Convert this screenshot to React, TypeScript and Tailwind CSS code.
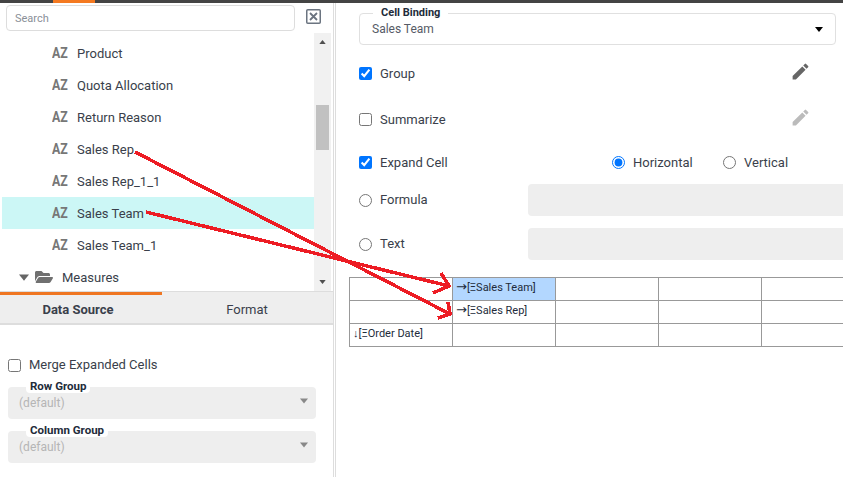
import React from 'react';
import { MdEdit } from 'react-icons/md';
import { FaFolderOpen } from 'react-icons/fa';

const fields = ['Product', 'Quota Allocation', 'Return Reason', 'Sales Rep', 'Sales Rep_1_1', 'Sales Team', 'Sales Team_1'];

const Triangle: React.FC<{ className: string; up?: boolean }> = ({ className, up }) => (
  <svg className={className} viewBox="0 0 8 5" fill="currentColor">
    <path d={up ? 'M0 5L4 0L8 5Z' : 'M0 0L8 0L4 5Z'} />
  </svg>
);

const FieldRow: React.FC<{ name: string; selected: boolean }> = ({ name, selected }) => (
  <div className={`flex h-8 items-center ${selected ? 'bg-[#ccf7f6]' : ''}`}>
    <span className="ml-[50px] w-[25px] origin-left scale-x-[0.82] font-bold text-[15px] leading-none text-[#777]">AZ</span>
    <span className="mt-[2px] text-[13px] text-[#3a3f4b]">{name}</span>
  </div>
);

const GroupSelect: React.FC<{ label: string }> = ({ label }) => (
  <div className="relative h-8 rounded bg-[#eeeeee] flex items-center justify-between pl-[11px] pr-2">
    <span className="absolute left-[18px] -top-[8px] bg-white rounded-b px-1 text-[11.5px] leading-[14px] font-bold text-[#222b3a]">{label}</span>
    <span className="text-[12px] text-[#b5b5b5]">(default)</span>
    <Triangle className="w-2 h-[6px] text-[#888] -mt-[4px]" />
  </div>
);

const CheckRow: React.FC<{ label: string; checked?: boolean; pencil?: string; className: string }> = ({ label, checked, pencil, className }) => (
  <div className={`flex h-8 items-center ${className}`}>
    <input type="checkbox" readOnly checked={!!checked} className="m-0 w-[13px] h-[13px]" />
    <span className="ml-2 mt-[2px] text-[13px] text-[#3a3f4b]">{label}</span>
    {pencil && <MdEdit className={`ml-auto mr-[32px] -mt-1 ${pencil}`} size={21} />}
  </div>
);

const FieldRadio: React.FC<{ label: string; className: string }> = ({ label, className }) => (
  <div className={`flex h-8 items-center ${className}`}>
    <input type="radio" readOnly checked={false} className="m-0 w-[13px] h-[13px]" />
    <span className="ml-2 w-[148px] text-[13px] text-[#3a3f4b]">{label}</span>
    <div className="h-8 flex-1 rounded-l bg-[#eeeeee]" />
  </div>
);

const cellBase = 'h-[23px] w-[103px] border border-[#999] px-[3px] pb-0 align-top text-[11px] leading-[13px] text-[#222b3a] whitespace-nowrap';
const cellText = `${cellBase} pt-[3px]`;
const arrowCell = `${cellBase} pt-[2px]`;

const RightArrow = () => (
  <span className="font-['DejaVu_Sans',sans-serif] text-[13px] leading-none">→</span>
);

export default function App() {
  return (
    <div className="relative flex h-[477px] w-[843px] flex-col overflow-hidden bg-white font-['Roboto',sans-serif]">
      {/* top bar */}
      <div className="h-[3px] shrink-0 bg-[#444444] pl-[53px]">
        <div className="h-[3px] w-[42px] bg-[#f47920]" />
      </div>

      <div className="flex min-h-0 flex-1">
        {/* left panel */}
        <div className="flex w-[336px] shrink-0 flex-col border-r-[3px] border-double border-[#dddddd]">
          <div className="flex h-[30px] shrink-0 items-start pt-[2px] pl-[6px]">
            <div className="flex h-[26px] w-[289px] items-center rounded border border-[#dddddd] pl-2 pt-[2px] text-[11px] text-[#8a8f98]">Search</div>
            <svg className="ml-[11px] mt-[4px] h-[15px] w-[15px] text-[#6b7480]" viewBox="0 0 15 15" fill="none" stroke="currentColor">
              <rect x="0.75" y="0.75" width="13.5" height="13.5" rx="1" strokeWidth="1.5" />
              <path d="M4 4L11 11M11 4L4 11" strokeWidth="1.8" />
            </svg>
          </div>

          <div className="flex h-[258px] shrink-0">
            <div className="ml-[2px] w-[312px] overflow-hidden pt-1">
              {fields.map((f) => (
                <FieldRow key={f} name={f} selected={f === 'Sales Team'} />
              ))}
              <div className="flex h-8 items-center">
                <Triangle className="ml-[17px] h-[7px] w-[10px] text-[#666]" />
                <FaFolderOpen className="ml-[6px] text-[#707070]" size={18} />
                <span className="ml-[9px] mt-[2px] text-[13px] text-[#3a3f4b]">Measures</span>
              </div>
            </div>
            <div className="flex w-[17px] flex-col items-center bg-[#f1f1f1] pt-[7px] pb-[7px]">
              <Triangle up className="h-[4px] w-[7px] text-[#505050]" />
              <div className="mt-[61px] h-[45px] w-[13px] bg-[#c1c1c1]" />
              <Triangle className="mt-auto h-[4px] w-[7px] text-[#505050]" />
            </div>
          </div>

          {/* tabs */}
          <div className="h-[34px] shrink-0 border-t border-[#dddddd] border-b-[2px] border-b-[#dddddd] bg-[#eeeeee] relative">
            <div className="absolute left-0 top-0 h-[3px] w-[162px] bg-[#ef7622]" />
            <div className="flex h-full pt-[5px] text-[13px] text-[#3a3f4b]">
              <div className="flex w-[156px] items-center justify-center font-bold">Data Source</div>
              <div className="ml-[6px] flex w-[170px] items-center justify-center">Format</div>
            </div>
          </div>

          <div className="pl-2 pr-[17px]">
            <div className="mt-[33px] flex h-[14px] items-center">
              <input type="checkbox" readOnly checked={false} className="m-0 h-[13px] w-[13px]" />
              <span className="ml-2 text-[13px] text-[#3a3f4b]">Merge Expanded Cells</span>
            </div>
            <div className="mt-[15px] flex flex-col gap-3">
              <GroupSelect label="Row Group" />
              <GroupSelect label="Column Group" />
            </div>
          </div>
        </div>

        {/* right panel */}
        <div className="min-w-0 flex-1 overflow-hidden pl-[23px] pt-[10px]">
          <div className="relative mr-[7px] flex h-8 items-center justify-between rounded border border-[#e0e0e0] pl-3 pr-[12px]">
            <span className="absolute left-[13px] -top-[8px] bg-white px-2 text-[11px] leading-[13px] font-bold text-[#222b3a]">Cell Binding</span>
            <span className="text-[12px] text-[#565b66]">Sales Team</span>
            <Triangle className="h-[5px] w-2 text-black" />
          </div>

          <CheckRow label="Group" checked pencil="text-[#666]" className="mt-3" />
          <CheckRow label="Summarize" pencil="text-[#bbb]" className="mt-[14px]" />

          <div className="mt-[11px] flex h-8 items-center">
            <input type="checkbox" readOnly checked className="m-0 h-[13px] w-[13px]" />
            <span className="ml-2 mt-[2px] w-[232px] text-[13px] text-[#3a3f4b]">Expand Cell</span>
            <input type="radio" readOnly checked className="m-0 h-[13px] w-[13px]" />
            <span className="ml-2 mt-[2px] w-[90px] text-[13px] text-[#3a3f4b]">Horizontal</span>
            <input type="radio" readOnly checked={false} className="m-0 h-[13px] w-[13px]" />
            <span className="ml-2 mt-[2px] text-[13px] text-[#3a3f4b]">Vertical</span>
          </div>

          <FieldRadio label="Formula" className="mt-[6px]" />
          <FieldRadio label="Text" className="mt-3" />

          <table className="-ml-[10px] mt-[17px] table-fixed border-collapse w-[516px]">
            <tbody>
              <tr>
                <td className={cellText} />
                <td className={`${arrowCell} bg-[#b3d7ff]`}><RightArrow />[ΞSales Team]</td>
                <td className={cellText} />
                <td className={cellText} />
                <td className={cellText} />
              </tr>
              <tr>
                <td className={cellText} />
                <td className={arrowCell}><RightArrow />[ΞSales Rep]</td>
                <td className={cellText} />
                <td className={cellText} />
                <td className={cellText} />
              </tr>
              <tr>
                <td className={cellText}><span className="font-['Liberation_Sans',sans-serif]">↓</span>[ΞOrder Date]</td>
                <td className={cellText} />
                <td className={cellText} />
                <td className={cellText} />
                <td className={cellText} />
              </tr>
            </tbody>
          </table>
        </div>
      </div>

      {/* red annotation arrows */}
      <svg className="absolute inset-0 h-[477px] w-[843px]" viewBox="0 0 843 477" fill="none" stroke="#ed1c24" strokeWidth="3.5" shapeRendering="crispEdges">
        <path d="M135 152L450 314M448 302L450 314L438 318" />
        <path d="M146 212L449 286M441 273L449 286L433 293" />
      </svg>
    </div>
  );
}
